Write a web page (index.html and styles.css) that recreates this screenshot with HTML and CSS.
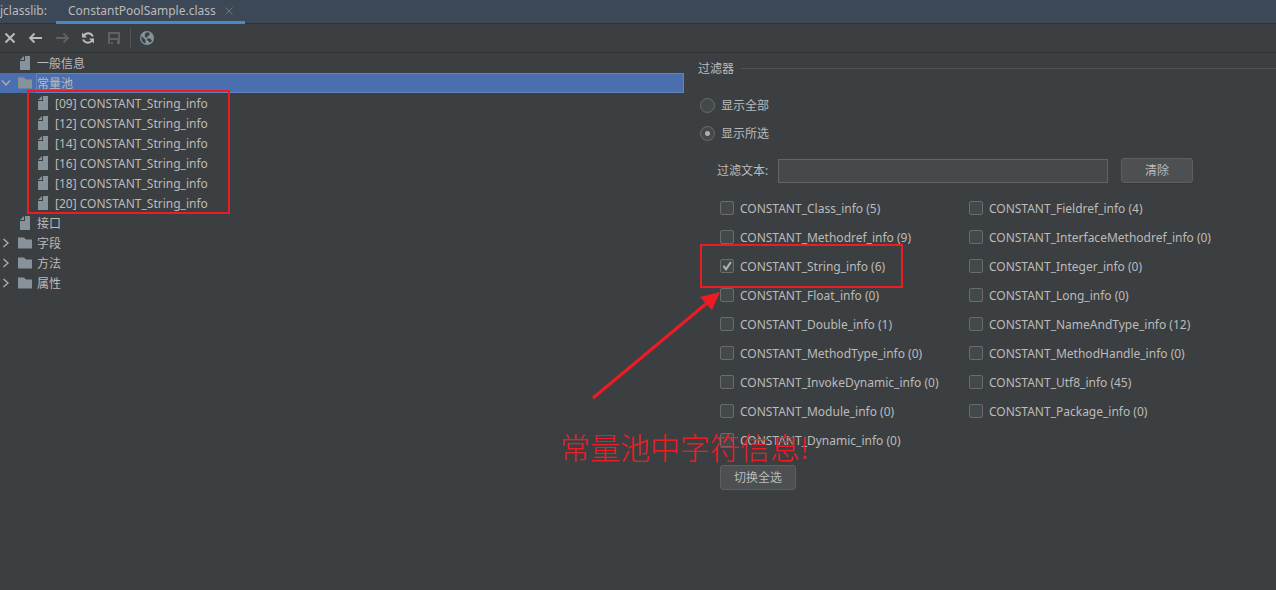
FILE: index.html
```
<!DOCTYPE html>
<html lang="zh-CN">
<head>
  <meta charset="UTF-8">
  <meta name="viewport" content="width=device-width, initial-scale=1">
  <title>jclasslib</title>
  <link rel="stylesheet" href="styles.css">
</head>
<body>
  <svg class="sprite" aria-hidden="true">
    <symbol id="icon-file" viewBox="0 0 10 14">
      <path d="M5 0h5v14H0V5h5z"/>
      <path d="M4 0v4H0z"/>
    </symbol>
    <symbol id="icon-folder" viewBox="0 0 14 11">
      <path d="M0 0h6l2 2h6v9H0z"/>
    </symbol>
    <symbol id="icon-chevron" viewBox="0 0 8 10">
      <path d="M1.5 1 6 5 1.5 9" fill="none" stroke="currentColor" stroke-width="1.4"/>
    </symbol>
  </svg>

  <header class="tabbar">
    <span class="tool-name">jclasslib:</span>
    <div class="tab">
      <span>ConstantPoolSample.class</span>
      <button class="tab-close" aria-label="关闭标签">
        <svg width="8" height="8" viewBox="0 0 8 8"><path d="M.5.5l7 7M7.5.5l-7 7" stroke="currentColor"/></svg>
      </button>
    </div>
  </header>

  <nav class="toolbar">
    <button aria-label="关闭">
      <svg viewBox="0 0 16 16"><path d="M3.5 3.5l9 9M12.5 3.5l-9 9" stroke="currentColor" stroke-width="2" fill="none"/></svg>
    </button>
    <button aria-label="后退">
      <svg viewBox="0 0 16 16"><path d="M14 8H2.5M6.500 3.500 2 8 6.500 12.500" stroke="currentColor" stroke-width="1.800" fill="none"/></svg>
    </button>
    <button aria-label="前进" disabled>
      <svg viewBox="0 0 16 16"><path d="M2 8h12M9.500 3.500 14 8 9.500 12.500" stroke="currentColor" stroke-width="1.800" fill="none"/></svg>
    </button>
    <button aria-label="重新加载">
      <svg viewBox="0 0 16 16">
        <path d="M3.500 6.500A5 5 0 0 1 12.800 6.500M12.500 9.500A5 5 0 0 1 3.200 9.500" stroke="currentColor" stroke-width="2" fill="none"/>
        <path d="M2 2.500v5h5zM14 13.500v-5H9z" fill="currentColor"/>
      </svg>
    </button>
    <button aria-label="保存" disabled>
      <svg viewBox="0 0 16 16"><path fill="currentColor" fill-rule="evenodd" d="M2 2h12v12H2zM4 4v4h8V4zM4 10v4h1v-2h2v2h4v-4z"/></svg>
    </button>
    <span class="separator"></span>
    <button aria-label="浏览器">
      <svg viewBox="0 0 16 16">
        <circle cx="8" cy="8" r="7" fill="#87939a"/>
        <path d="M2.500 6 6.500 10v3.600C4 13 2 10.500 2.500 6zM7 2.500h3.500v2.500L8.500 6v1.500H6.500L5.500 5zM8 8.500h3l2 2-1.500 2H11L8 10z" fill="#3c3f41"/>
      </svg>
    </button>
  </nav>

  <main class="split">
    <ul class="tree">
      <li>
        <div class="node"><span class="twisty"></span><svg class="icon"><use href="#icon-file"/></svg><span class="node-name">一般信息</span></div>
      </li>
      <li>
        <div class="node selected"><svg class="twisty open"><use href="#icon-chevron"/></svg><svg class="icon"><use href="#icon-folder"/></svg><span class="node-name">常量池</span></div>
        <ul class="children">
          <li class="node"><svg class="icon"><use href="#icon-file"/></svg><span class="node-name">[09] CONSTANT_String_info</span></li>
          <li class="node"><svg class="icon"><use href="#icon-file"/></svg><span class="node-name">[12] CONSTANT_String_info</span></li>
          <li class="node"><svg class="icon"><use href="#icon-file"/></svg><span class="node-name">[14] CONSTANT_String_info</span></li>
          <li class="node"><svg class="icon"><use href="#icon-file"/></svg><span class="node-name">[16] CONSTANT_String_info</span></li>
          <li class="node"><svg class="icon"><use href="#icon-file"/></svg><span class="node-name">[18] CONSTANT_String_info</span></li>
          <li class="node"><svg class="icon"><use href="#icon-file"/></svg><span class="node-name">[20] CONSTANT_String_info</span></li>
        </ul>
      </li>
      <li>
        <div class="node"><span class="twisty"></span><svg class="icon"><use href="#icon-file"/></svg><span class="node-name">接口</span></div>
      </li>
      <li>
        <div class="node"><svg class="twisty"><use href="#icon-chevron"/></svg><svg class="icon"><use href="#icon-folder"/></svg><span class="node-name">字段</span></div>
      </li>
      <li>
        <div class="node"><svg class="twisty"><use href="#icon-chevron"/></svg><svg class="icon"><use href="#icon-folder"/></svg><span class="node-name">方法</span></div>
      </li>
      <li>
        <div class="node"><svg class="twisty"><use href="#icon-chevron"/></svg><svg class="icon"><use href="#icon-folder"/></svg><span class="node-name">属性</span></div>
      </li>
    </ul>

    <section class="filter">
      <h2 class="filter-title">过滤器</h2>
      <label class="option"><input type="radio" name="show">显示全部</label>
      <label class="option"><input type="radio" name="show" checked>显示所选</label>

      <div class="filter-body">
        <div class="filter-text">
          <label for="filter-text">过滤文本:</label>
          <input type="text" id="filter-text">
          <button class="btn">清除</button>
        </div>

        <div class="types">
          <label><input type="checkbox">CONSTANT_Class_info (5)</label>
          <label><input type="checkbox">CONSTANT_Fieldref_info (4)</label>
          <label><input type="checkbox">CONSTANT_Methodref_info (9)</label>
          <label><input type="checkbox">CONSTANT_InterfaceMethodref_info (0)</label>
          <div class="marked">
            <label><input type="checkbox" checked>CONSTANT_String_info (6)</label>
            <svg class="arrow" viewBox="0 0 130 110">
              <path d="M1 107 115 12" stroke="#ed1c24" stroke-width="3"/>
              <path d="M128 1 108 6 120 19z" fill="#ed1c24"/>
            </svg>
            <span class="note">常量池中字符信息!</span>
          </div>
          <label><input type="checkbox">CONSTANT_Integer_info (0)</label>
          <label><input type="checkbox">CONSTANT_Float_info (0)</label>
          <label><input type="checkbox">CONSTANT_Long_info (0)</label>
          <label><input type="checkbox">CONSTANT_Double_info (1)</label>
          <label><input type="checkbox">CONSTANT_NameAndType_info (12)</label>
          <label><input type="checkbox">CONSTANT_MethodType_info (0)</label>
          <label><input type="checkbox">CONSTANT_MethodHandle_info (0)</label>
          <label><input type="checkbox">CONSTANT_InvokeDynamic_info (0)</label>
          <label><input type="checkbox">CONSTANT_Utf8_info (45)</label>
          <label><input type="checkbox">CONSTANT_Module_info (0)</label>
          <label><input type="checkbox">CONSTANT_Package_info (0)</label>
          <label><input type="checkbox">CONSTANT_Dynamic_info (0)</label>
        </div>
        <button class="btn">切换全选</button>
      </div>
    </section>
  </main>
</body>
</html>
```
FILE: styles.css
```
*,
*::before,
*::after {
  box-sizing: border-box;
}
body {
  margin: 0;
  background: #3c3f41;
  color: #bbbbbb;
  font-family: "Noto Sans", "Noto Sans CJK SC", sans-serif;
  font-size: 12px;
  line-height: 20px;
  overflow-x: hidden;
}
ul {
  list-style: none;
  margin: 0;
  padding: 0;
}
button,
input {
  font: inherit;
  color: inherit;
  margin: 0;
}
.sprite {
  display: none;
}

/* Tabs */
.tabbar {
  display: flex;
  height: 24px;
  background: #3d4856;
  border-bottom: 1px solid #323232;
  line-height: 22px;
}
.tool-name {
  width: 56px;
}
.tab {
  display: flex;
  gap: 9px;
  height: 24px;
  padding: 0 12px;
  border-bottom: 3px solid #4a88c7;
}
.tab-close {
  display: flex;
  align-items: center;
  padding: 0;
  border: 0;
  background: none;
  color: #6e757c;
}

/* Toolbar */
.toolbar {
  display: flex;
  align-items: center;
  gap: 10px;
  height: 29px;
  padding: 0 2px;
  border-bottom: 1px solid #323232;
}
.toolbar button {
  width: 16px;
  height: 16px;
  padding: 0;
  border: 0;
  background: none;
  color: #bbbbbb;
}
.toolbar button:disabled {
  color: #5f6162;
}
.toolbar svg {
  display: block;
  width: 16px;
  height: 16px;
}
.separator {
  width: 1px;
  height: 20px;
  margin: 0 -2px;
  background: #555555;
}

.split {
  display: grid;
  grid-template-columns: 53.6% minmax(0, 1fr);
}

/* Tree */
.node {
  display: flex;
  align-items: center;
  height: 20px;
}
.twisty {
  width: 8px;
  height: 10px;
  margin: 0 8px 0 2px;
  color: #adadad;
}
.twisty.open {
  transform: rotate(90deg);
}
.icon {
  width: 14px;
  height: 14px;
  margin-right: 4px;
  fill: #87939a;
}
.node-name {
  flex: 1;
  height: 20px;
  border: 1px solid transparent;
}
.selected {
  background: #4b6eaf;
}
.selected .node-name {
  border-color: #6482c0;
}
.children {
  position: relative;
}
.children .node {
  padding-left: 36px;
}
.children::after {
  content: "";
  position: absolute;
  top: -3px;
  left: 27px;
  width: 203px;
  height: 124px;
  border: 2px solid #ed1c24;
}

/* Filter */
.filter {
  padding: 6px 0 0 14px;
}
.filter-title {
  display: flex;
  align-items: center;
  gap: 7px;
  margin: 0 0 13px;
  font-size: 12px;
  font-weight: normal;
}
.filter-title::after {
  content: "";
  flex: 1;
  height: 1px;
  margin-bottom: 1px;
  background: #515151;
}
.option {
  display: flex;
  align-items: center;
  gap: 6px;
  height: 28px;
  padding-left: 2px;
}
.option input,
.types input {
  appearance: none;
  flex: none;
  width: 14px;
  height: 14px;
  margin-bottom: 1px;
  border: 1px solid #6b6b6b;
  border-radius: 2px;
  background: #43494a;
}
.option input {
  width: 15px;
  height: 15px;
  border-radius: 50%;
}
.option input:checked {
  background: radial-gradient(circle, #adadad 2px, #43494a 3px);
}
.filter-body {
  padding: 10px 83px 0 22px;
}
.filter-text {
  display: flex;
  align-items: center;
  margin: 0 0 11px -3px;
}
.filter-text label {
  flex: none;
  width: 61px;
}
.filter-text input {
  flex: 1;
  min-width: 0;
  height: 24px;
  margin-right: 13px;
  padding: 2px 6px;
  border: 1px solid #646464;
  background: #45494a;
}
.btn {
  height: 25px;
  min-width: 72px;
  padding: 0 13px;
  border: 1px solid #5e6060;
  border-radius: 3px;
  background: #4c5052;
  box-shadow: 0 1px 0 #36393a;
}
.types {
  display: grid;
  grid-template-columns: 249px auto;
  grid-auto-rows: 29px;
  margin-bottom: 10px;
  white-space: nowrap;
}
.types label {
  display: flex;
  align-items: center;
  gap: 6px;
  height: 29px;
}
.types input:checked::before {
  content: "";
  display: block;
  width: 12px;
  height: 12px;
  background: #adadad;
  clip-path: polygon(14% 52%, 28% 44%, 41% 62%, 76% 12%, 91% 20%, 46% 88%, 37% 88%);
}

/* Red annotations */
.marked {
  position: relative;
}
.marked::before {
  content: "";
  position: absolute;
  top: -8px;
  left: -20px;
  width: 203px;
  height: 44px;
  border: 2px solid #ed1c24;
  pointer-events: none;
}
.arrow {
  position: absolute;
  top: 39px;
  left: -128px;
  width: 130px;
  height: 110px;
  pointer-events: none;
}
.note {
  position: absolute;
  top: 174px;
  left: -160px;
  color: #ed1c24;
  font-family: "Noto Sans CJK SC", sans-serif;
  font-size: 30px;
  font-weight: 300;
  line-height: 40px;
  pointer-events: none;
}
```
